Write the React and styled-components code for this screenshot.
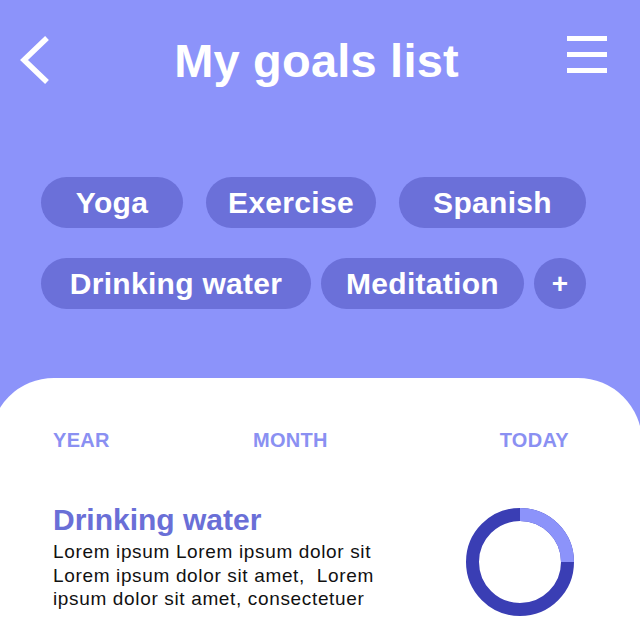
import React from "react";
import styled, { createGlobalStyle } from "styled-components";

const Global = createGlobalStyle`
  html, body {
    margin: 0;
    height: 640px;
    overflow: hidden;
    background: #8c93fa;
  }
  * { box-sizing: border-box; }
`;

const Screen = styled.div`
  width: 640px;
  height: 640px;
  display: flex;
  flex-direction: column;
  font-family: "Liberation Sans", Arial, sans-serif;
`;

const Header = styled.header`
  display: flex;
  align-items: center;
  justify-content: space-between;
  height: 48px;
  margin-top: 36px;
  padding: 0 33px 0 20px;
`;

const Title = styled.h1`
  margin: 0 0 0 16px;
  font-size: 47px;
  line-height: 47px;
  font-weight: 700;
  color: #fff;
  letter-spacing: 0.2px;
`;

const Burger = styled.div`
  align-self: flex-start;
  width: 40px;
  height: 37px;
  display: flex;
  flex-direction: column;
  justify-content: space-between;

  span {
    display: block;
    height: 5px;
    background: #fff;
  }
`;

const Chips = styled.div`
  display: flex;
  flex-direction: column;
  gap: 30px;
  margin-top: 93px;
  padding: 0 54px 0 41px;
`;

const ChipRow = styled.div`
  display: flex;
  justify-content: space-between;
`;

const Chip = styled.div`
  width: ${(p) => p.$w}px;
  height: 51px;
  border-radius: 26px;
  background: #6b70d9;
  color: #fff;
  font-size: ${(p) => (p.$small ? 28 : 30)}px;
  line-height: 51px;
  font-weight: 700;
  text-align: center;
  letter-spacing: 0.3px;
`;

const Card = styled.section`
  flex: 1;
  margin: 69px -2px 0 -10px;
  background: #fff;
  border-radius: 64px 64px 0 0;
  padding: 50px 68px 0 63px;
`;

const Tabs = styled.div`
  display: grid;
  grid-template-columns: 200px 1fr auto;
  padding-right: 5px;
`;

const Tab = styled.div`
  font-size: 20px;
  line-height: 24px;
  font-weight: 700;
  color: #8a90f2;
  letter-spacing: 0.3px;
`;

const Goal = styled.div`
  display: flex;
  justify-content: space-between;
  align-items: flex-start;
  margin-top: 51px;
`;

const GoalName = styled.h2`
  margin: 0;
  font-size: 30px;
  line-height: 34px;
  font-weight: 700;
  color: #6a6fd7;
`;

const GoalText = styled.p`
  margin: 3px 0 0;
  font-size: 19px;
  line-height: 23.5px;
  color: #111;
  letter-spacing: 0.65px;
  white-space: pre;
`;

const Donut = styled.svg`
  margin-top: 5px;
  flex: none;
`;

const Back = () => (
  <svg width="30" height="48" viewBox="0 0 30 48">
    <polyline
      points="27,2 4,24 27,46"
      fill="none"
      stroke="#fff"
      strokeWidth="5.5"
    />
  </svg>
);

const Progress = ({ value }) => {
  const r = 47.5;
  const c = 2 * Math.PI * r;
  return (
    <Donut width="108" height="108" viewBox="0 0 108 108">
      <circle cx="54" cy="54" r={r} fill="none" stroke="#3a3eb4" strokeWidth="13" />
      <circle
        cx="54"
        cy="54"
        r={r}
        fill="none"
        stroke="#8c93fa"
        strokeWidth="13"
        strokeDasharray={`${c * value} ${c}`}
        transform="rotate(-90 54 54)"
      />
    </Donut>
  );
};

export default function App() {
  return (
    <Screen>
      <Global />
      <Header>
        <Back />
        <Title>My goals list</Title>
        <Burger>
          <span />
          <span />
          <span />
        </Burger>
      </Header>

      <Chips>
        <ChipRow>
          <Chip $w={142}>Yoga</Chip>
          <Chip $w={170}>Exercise</Chip>
          <Chip $w={187}>Spanish</Chip>
        </ChipRow>
        <ChipRow>
          <Chip $w={270}>Drinking water</Chip>
          <Chip $w={203}>Meditation</Chip>
          <Chip $w={52} $small>+</Chip>
        </ChipRow>
      </Chips>

      <Card>
        <Tabs>
          <Tab>YEAR</Tab>
          <Tab>MONTH</Tab>
          <Tab>TODAY</Tab>
        </Tabs>
        <Goal>
          <div>
            <GoalName>Drinking water</GoalName>
            <GoalText>
              {"Lorem ipsum Lorem ipsum dolor sit\nLorem ipsum dolor sit amet,  Lorem\nipsum dolor sit amet, consectetuer"}
            </GoalText>
          </div>
          <Progress value={0.25} />
        </Goal>
      </Card>
    </Screen>
  );
}
